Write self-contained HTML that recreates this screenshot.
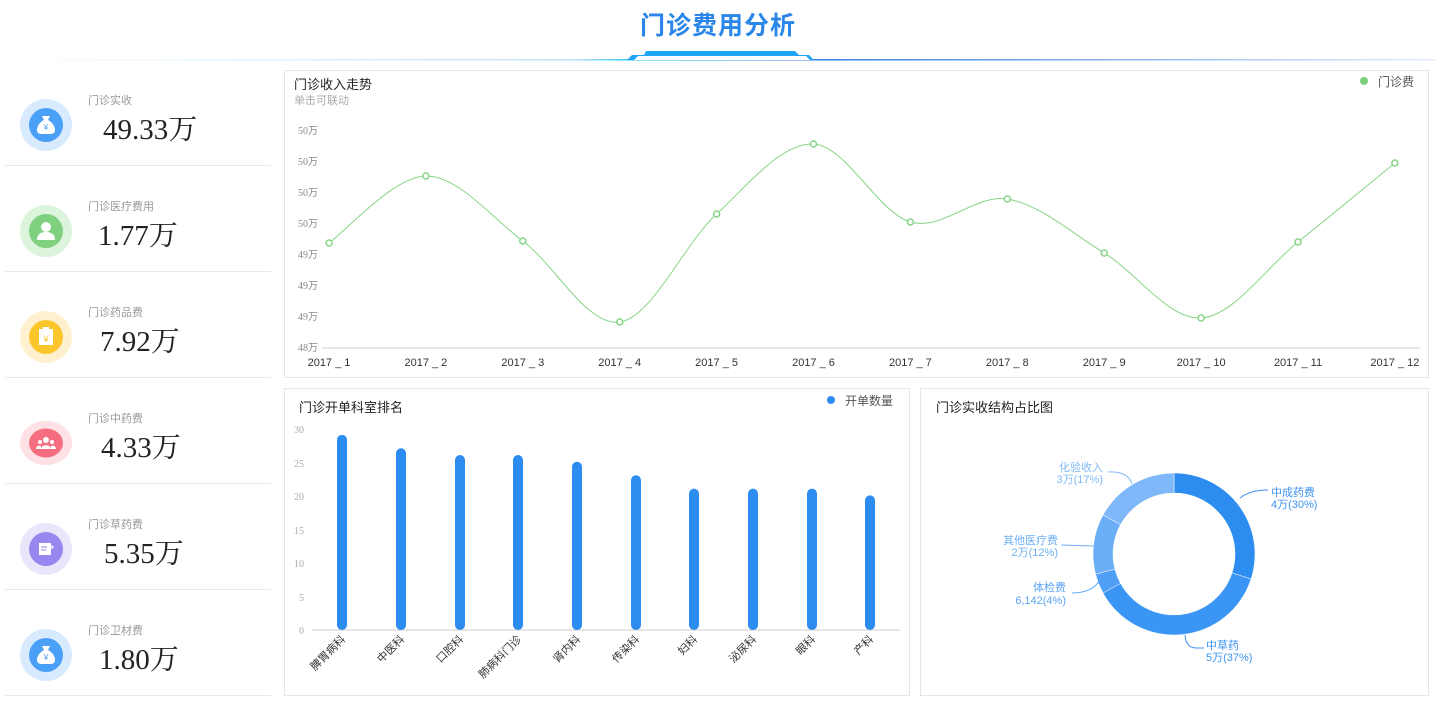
<!DOCTYPE html>
<html><head><meta charset="utf-8"><style>
*{margin:0;padding:0}
body{width:1436px;height:701px;background:#fff;overflow:hidden;position:relative;font-family:"Liberation Sans","Noto Sans CJK SC",sans-serif}
.card{position:absolute;left:5px;width:266px;height:105px;border-bottom:1px solid #e8e8e8}
.lab{position:absolute;left:83px;font-size:11px;color:#999}
.val{position:absolute;font-family:"Liberation Serif","Noto Serif CJK SC",serif;font-size:29px;color:#222}
.panel{position:absolute;border:1px solid #e6e6e6;background:#fff}
</style></head><body>
<div style="position:absolute;left:0;width:1436px;top:6px;text-align:center;font-size:25px;font-weight:bold;color:#2a86e8;letter-spacing:1px">门诊费用分析</div>
<svg style="position:absolute;left:0;top:0" width="1436" height="70">
<defs><linearGradient id="hl" x1="0" x2="1"><stop offset="0" stop-color="#fff"/><stop offset="0.4" stop-color="#bfe3fb"/><stop offset="0.44" stop-color="#20c8f8"/><stop offset="0.56" stop-color="#2e7df0"/><stop offset="1" stop-color="#e6eefc"/></linearGradient></defs>
<rect x="0" y="59" width="1436" height="1.5" fill="url(#hl)"/>
<path d="M627 60 L632 55 L644 55 L646 51 L795 51 L799 55 L809 55 L814 60 Z" fill="#1ea4f7"/>
<path d="M634 60 L638 56 L806 56 L810 60 Z" fill="#fff"/>
</svg>

<div class="card" style="top:60px"></div>
<div class="card" style="top:166px"></div>
<div class="card" style="top:272px"></div>
<div class="card" style="top:378px"></div>
<div class="card" style="top:484px"></div>
<div class="card" style="top:590px"></div>

<svg style="position:absolute;left:0;top:0" width="280" height="701" font-family="Liberation Sans,Noto Sans CJK SC,sans-serif">
<g transform="translate(46,125)"><circle r="26" fill="#d8eafd"/><circle r="17" fill="#4aa0f7"/><path d="M-4-9h8l-2 4c4 2 7 6 7 10c0 3-2 4-5 4h-8c-3 0-5-1-5-4c0-4 3-8 7-10z" fill="#fff"/><text y="5" text-anchor="middle" font-size="8" fill="#4aa0f7">¥</text></g>
<g transform="translate(46,231)"><circle r="26" fill="#dcf3dc"/><circle r="17" fill="#7fd07f"/><circle cy="-4" r="5" fill="#fff"/><path d="M-9 9c0-6 4-8 9-8s9 2 9 8z" fill="#fff"/></g>
<g transform="translate(46,337)"><circle r="26" fill="#fff1d0"/><circle r="17" fill="#fbc62c"/><rect x="-7" y="-8" width="14" height="16" fill="#fff"/><rect x="-3" y="-10" width="6" height="4" fill="#fff"/><text y="5" text-anchor="middle" font-size="9" fill="#fbc62c">¥</text></g>
<g transform="translate(46,443)"><circle r="26" fill="#fde1e4" transform="scale(1,0.85)"/><circle r="17" fill="#f56e80" transform="scale(1,0.85)"/><circle cy="-3" r="3" fill="#fff"/><circle cx="-6" cy="-1" r="2" fill="#fff"/><circle cx="6" cy="-1" r="2" fill="#fff"/><path d="M-5 6c0-5 10-5 10 0z M-10 6c0-3 3-4 5-3v3z M10 6c0-3-3-4-5-3v3z" fill="#fff"/></g>
<g transform="translate(46,549)"><circle r="26" fill="#e9e6fb"/><circle r="17" fill="#9787ef"/><rect x="-7" y="-6" width="12" height="12" fill="#fff"/><path d="M-5-2h6M-5 1h5" stroke="#9787ef"/><path d="M6-4v4M4-2h4" stroke="#fff"/></g>
<g transform="translate(46,655)"><circle r="26" fill="#d8eafd"/><circle r="17" fill="#4aa0f7"/><path d="M-4-9h8l-2 4c4 2 7 6 7 10c0 3-2 4-5 4h-8c-3 0-5-1-5-4c0-4 3-8 7-10z" fill="#fff"/><text y="5" text-anchor="middle" font-size="8" fill="#4aa0f7">¥</text></g>
</svg>

<div class="lab" style="top:92px;left:88px">门诊实收</div><div class="val" style="top:107px;left:103px">49.33万</div>
<div class="lab" style="top:198px;left:88px">门诊医疗费用</div><div class="val" style="top:213px;left:98px">1.77万</div>
<div class="lab" style="top:304px;left:88px">门诊药品费</div><div class="val" style="top:319px;left:100px">7.92万</div>
<div class="lab" style="top:410px;left:88px">门诊中药费</div><div class="val" style="top:425px;left:101px">4.33万</div>
<div class="lab" style="top:516px;left:88px">门诊草药费</div><div class="val" style="top:531px;left:104px">5.35万</div>
<div class="lab" style="top:622px;left:88px">门诊卫材费</div><div class="val" style="top:637px;left:99px">1.80万</div>

<div class="panel" style="left:284px;top:70px;width:1143px;height:306px"></div>
<div class="panel" style="left:284px;top:388px;width:624px;height:306px"></div>
<div class="panel" style="left:920px;top:388px;width:507px;height:306px"></div>

<svg id="main" style="position:absolute;left:0;top:0" width="1436" height="701" font-family="Liberation Sans,Noto Sans CJK SC,sans-serif">
<text x="294" y="89" font-size="13" fill="#222">门诊收入走势</text>
<text x="294" y="104" font-size="11" fill="#aaa">单击可联动</text>
<circle cx="1364" cy="81" r="4" fill="#7ccf7c"/><text x="1378" y="86" font-size="12" fill="#555">门诊费</text>
<g font-size="10" fill="#888" font-family="Liberation Serif,Noto Sans CJK SC,serif">
<text x="298" y="134">50万</text><text x="298" y="165">50万</text><text x="298" y="196">50万</text><text x="298" y="227">50万</text><text x="298" y="258">49万</text><text x="298" y="289">49万</text><text x="298" y="320">49万</text><text x="298" y="351">48万</text></g>
<line x1="322" y1="348" x2="1420" y2="348" stroke="#ccc"/>
<g id="xl" font-size="11" fill="#333" text-anchor="middle"></g>
<path id="lp" fill="none" stroke="#86d486" stroke-width="1"/>
<g id="pts"></g>

<text x="299" y="412" font-size="13" fill="#222">门诊开单科室排名</text>
<circle cx="831" cy="400" r="4" fill="#2d8cf0"/><text x="845" y="405" font-size="12" fill="#555">开单数量</text>
<g font-size="10" fill="#aaa" text-anchor="end" font-family="Liberation Serif,serif">
<text x="304" y="433">30</text><text x="304" y="467">25</text><text x="304" y="500">20</text><text x="304" y="534">15</text><text x="304" y="567">10</text><text x="304" y="601">5</text><text x="304" y="634">0</text></g>
<line x1="312" y1="630" x2="900" y2="630" stroke="#ccc"/>
<g id="bars"></g>

<text x="936" y="412" font-size="13" fill="#222">门诊实收结构占比图</text>
<g id="donut"></g>
<g font-size="11" fill="#3d93f3">
<path d="M1240 498 Q1250 490 1268 490" fill="none" stroke="#3d93f3"/>
<text x="1271" y="496">中成药费</text><text x="1271" y="508">4万(30%)</text>
<path d="M1185 635 Q1186 648 1196 648 L1204 648" fill="none" stroke="#3d93f3"/>
<text x="1206" y="649">中草药</text><text x="1206" y="661">5万(37%)</text>
</g>
<g font-size="11" text-anchor="end">
<path d="M1100 580 Q1092 593 1072 593" fill="none" stroke="#5aa4f6"/>
<text x="1066" y="591" fill="#5aa4f6">体检费</text><text x="1066" y="604" fill="#5aa4f6">6,142(4%)</text>
<path d="M1094 546 L1061 545" fill="none" stroke="#6fb0f7"/>
<text x="1058" y="544" fill="#6fb0f7">其他医疗费</text><text x="1058" y="556" fill="#6fb0f7">2万(12%)</text>
<path d="M1132 484 Q1128 471 1108 472" fill="none" stroke="#80b9f8"/>
<text x="1103" y="471" fill="#80b9f8">化验收入</text><text x="1103" y="483" fill="#80b9f8">3万(17%)</text>
</g>
</svg>
<script>
(function(){
var NS="http://www.w3.org/2000/svg";
function el(t,a,p){var e=document.createElementNS(NS,t);for(var k in a)e.setAttribute(k,a[k]);p.appendChild(e);return e;}
var xs=[],ys=[243,176,241,322,214,144,222,199,253,318,242,163];
for(var i=0;i<12;i++)xs.push(329+i*96.9);
var d="M"+xs[0]+" "+ys[0];
for(var i=0;i<11;i++){var p0=i?i-1:0,p3=i<10?i+2:11;
var c1x=xs[i]+(xs[i+1]-xs[p0])/6,c1y=ys[i]+(ys[i+1]-ys[p0])/6,c2x=xs[i+1]-(xs[p3]-xs[i])/6,c2y=ys[i+1]-(ys[p3]-ys[i])/6;
d+=" C"+c1x+" "+c1y+" "+c2x+" "+c2y+" "+xs[i+1]+" "+ys[i+1];}
document.getElementById("lp").setAttribute("d",d);
var pts=document.getElementById("pts"),xl=document.getElementById("xl");
for(var i=0;i<12;i++){el("circle",{cx:xs[i],cy:ys[i],r:3,fill:"#fff",stroke:"#86d486","stroke-width":1.5},pts);
var t=el("text",{x:Math.min(xs[i],1395),y:366},xl);t.textContent="2017 _ "+(i+1);}
var bx=[342,401,460,518,577,636,694,753,812,870],bv=[29,27,26,26,25,23,21,21,21,20],bn=["脾胃病科","中医科","口腔科","肺病科门诊","肾内科","传染科","妇科","泌尿科","眼科","产科"];
var bars=document.getElementById("bars");
for(var i=0;i<10;i++){var ty=630-bv[i]*6.73;el("rect",{x:bx[i]-5,y:ty,width:10,height:630-ty,rx:5,fill:"#2d8cf0"},bars);
var t=el("text",{x:bx[i]+4,y:640,"font-size":11,fill:"#333","text-anchor":"end",transform:"rotate(-45 "+(bx[i]+4)+" 640)"},bars);t.textContent=bn[i];}
var dn=document.getElementById("donut"),cx=1174,cy=554,R=81,r=61,a=0;
var seg=[[30,"#2d8cf0"],[37,"#3a95f5"],[4,"#4f9ff6"],[12,"#6aaef7"],[17,"#7fb8f8"]];
seg.forEach(function(s){var a1=a,a2=a+s[0]*3.6;a=a2;function P(rr,ang){ang=(ang-90)*Math.PI/180;return (cx+rr*Math.cos(ang))+" "+(cy+rr*Math.sin(ang));}
var lg=(a2-a1)>180?1:0;
el("path",{d:"M"+P(R,a1)+" A"+R+" "+R+" 0 "+lg+" 1 "+P(R,a2)+" L"+P(r,a2)+" A"+r+" "+r+" 0 "+lg+" 0 "+P(r,a1)+"Z",fill:s[1],stroke:"#fff","stroke-width":0.5},dn);});
})();
</script>
</body></html>
